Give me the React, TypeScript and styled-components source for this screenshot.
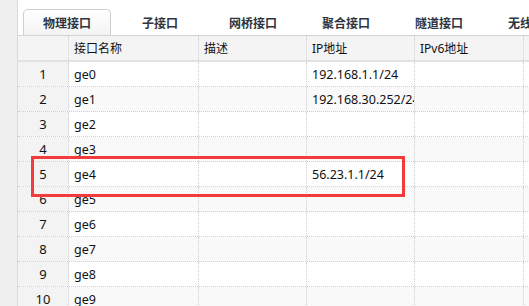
import React from "react";
import styled, { createGlobalStyle } from "styled-components";

const Global = createGlobalStyle`
  html, body { margin: 0; padding: 0; background: #ffffff; overflow: hidden; }
  body { font-family: "Noto Sans", "Noto Sans CJK SC", sans-serif; }
  * { box-sizing: border-box; }
`;

const Page = styled.div`
  display: flex;
  width: 529px;
  height: 306px;
  overflow: hidden;
`;

const Sidebar = styled.div`
  width: 18px;
  flex: none;
  background: #f0f0f0;
  border-right: 1px solid #d9d9d9;
`;

const Main = styled.div`
  flex: 1;
  min-width: 0;
  display: flex;
  flex-direction: column;
  overflow: hidden;
`;

const TabBar = styled.div`
  height: 35px;
  flex: none;
  display: flex;
  align-items: flex-end;
  padding-left: 5px;
  gap: 5px;
  white-space: nowrap;
`;

const Tab = styled.div<{ $active?: boolean }>`
  width: 88px;
  height: 26px;
  flex: none;
  display: flex;
  align-items: center;
  justify-content: center;
  font-family: "Noto Sans CJK SC", sans-serif;
  font-weight: 700;
  font-size: 12px;
  color: #2e3540;
  border: 1px solid ${(p) => (p.$active ? "#cfcfcf" : "transparent")};
  border-bottom: none;
  border-radius: 5px 5px 0 0;
  background: ${(p) =>
    p.$active ? "linear-gradient(#ffffff, #f3f3f3)" : "transparent"};
`;

const Table = styled.div`
  position: relative;
  border-top: 1px solid #d4d4d4;
  width: 720px;
`;

const HeaderRow = styled.div`
  display: flex;
  height: 26px;
  background: #f4f4f4;
  border-bottom: 2px solid #e2e2e2;
`;

const HeaderCell = styled.div<{ $w: number }>`
  width: ${(p) => p.$w}px;
  flex: none;
  display: flex;
  align-items: center;
  padding-left: 5px;
  font-family: "Noto Sans", "Noto Sans CJK SC", sans-serif;
  font-size: 12px;
  color: #111;
  border-right: 1px dotted #cfcfcf;
  overflow: hidden;
  white-space: nowrap;
`;

const Row = styled.div<{ $even: boolean }>`
  display: flex;
  height: 25px;
  background: ${(p) => (p.$even ? "#f9f9f9" : "#ffffff")};
  border-bottom: 1px dotted #d0d0d0;
`;

const IndexCell = styled.div`
  width: 51px;
  flex: none;
  display: flex;
  align-items: center;
  justify-content: center;
  background: #f3f3f3;
  border-right: 1px dotted #cfcfcf;
  font-size: 13px;
  color: #111;
`;

const Cell = styled.div<{ $w: number }>`
  width: ${(p) => p.$w}px;
  flex: none;
  display: flex;
  align-items: center;
  padding-left: 5px;
  font-size: 12.5px;
  color: #111;
  border-right: 1px dotted #cfcfcf;
  overflow: hidden;
  white-space: nowrap;
`;

const Highlight = styled.div`
  position: absolute;
  left: 13px;
  top: 120px;
  width: 374px;
  height: 41px;
  border: 3px solid #f23c3c;
  pointer-events: none;
`;

const tabs = ["物理接口", "子接口", "网桥接口", "聚合接口", "隧道接口", "无线接口"];
const widths = [130, 108, 108, 109, 120];
const headers = ["接口名称", "描述", "IP地址", "IPv6地址", ""];
const ips: Record<number, string> = {
  0: "192.168.1.1/24",
  1: "192.168.30.252/24",
  4: "56.23.1.1/24",
};

export default function App() {
  return (
    <>
      <Global />
      <Page>
        <Sidebar />
        <Main>
          <TabBar>
            {tabs.map((t, i) => (
              <Tab key={t} $active={i === 0}>
                {t}
              </Tab>
            ))}
          </TabBar>
          <Table>
            <HeaderRow>
              <HeaderCell $w={51} />
              {headers.map((h, i) => (
                <HeaderCell key={i} $w={widths[i]}>
                  {h}
                </HeaderCell>
              ))}
            </HeaderRow>
            {Array.from({ length: 10 }, (_, i) => (
              <Row key={i} $even={i % 2 === 1}>
                <IndexCell>{i + 1}</IndexCell>
                <Cell $w={widths[0]}>ge{i}</Cell>
                <Cell $w={widths[1]} />
                <Cell $w={widths[2]}>{ips[i] ?? ""}</Cell>
                <Cell $w={widths[3]} />
                <Cell $w={widths[4]} />
              </Row>
            ))}
            <Highlight />
          </Table>
        </Main>
      </Page>
    </>
  );
}
